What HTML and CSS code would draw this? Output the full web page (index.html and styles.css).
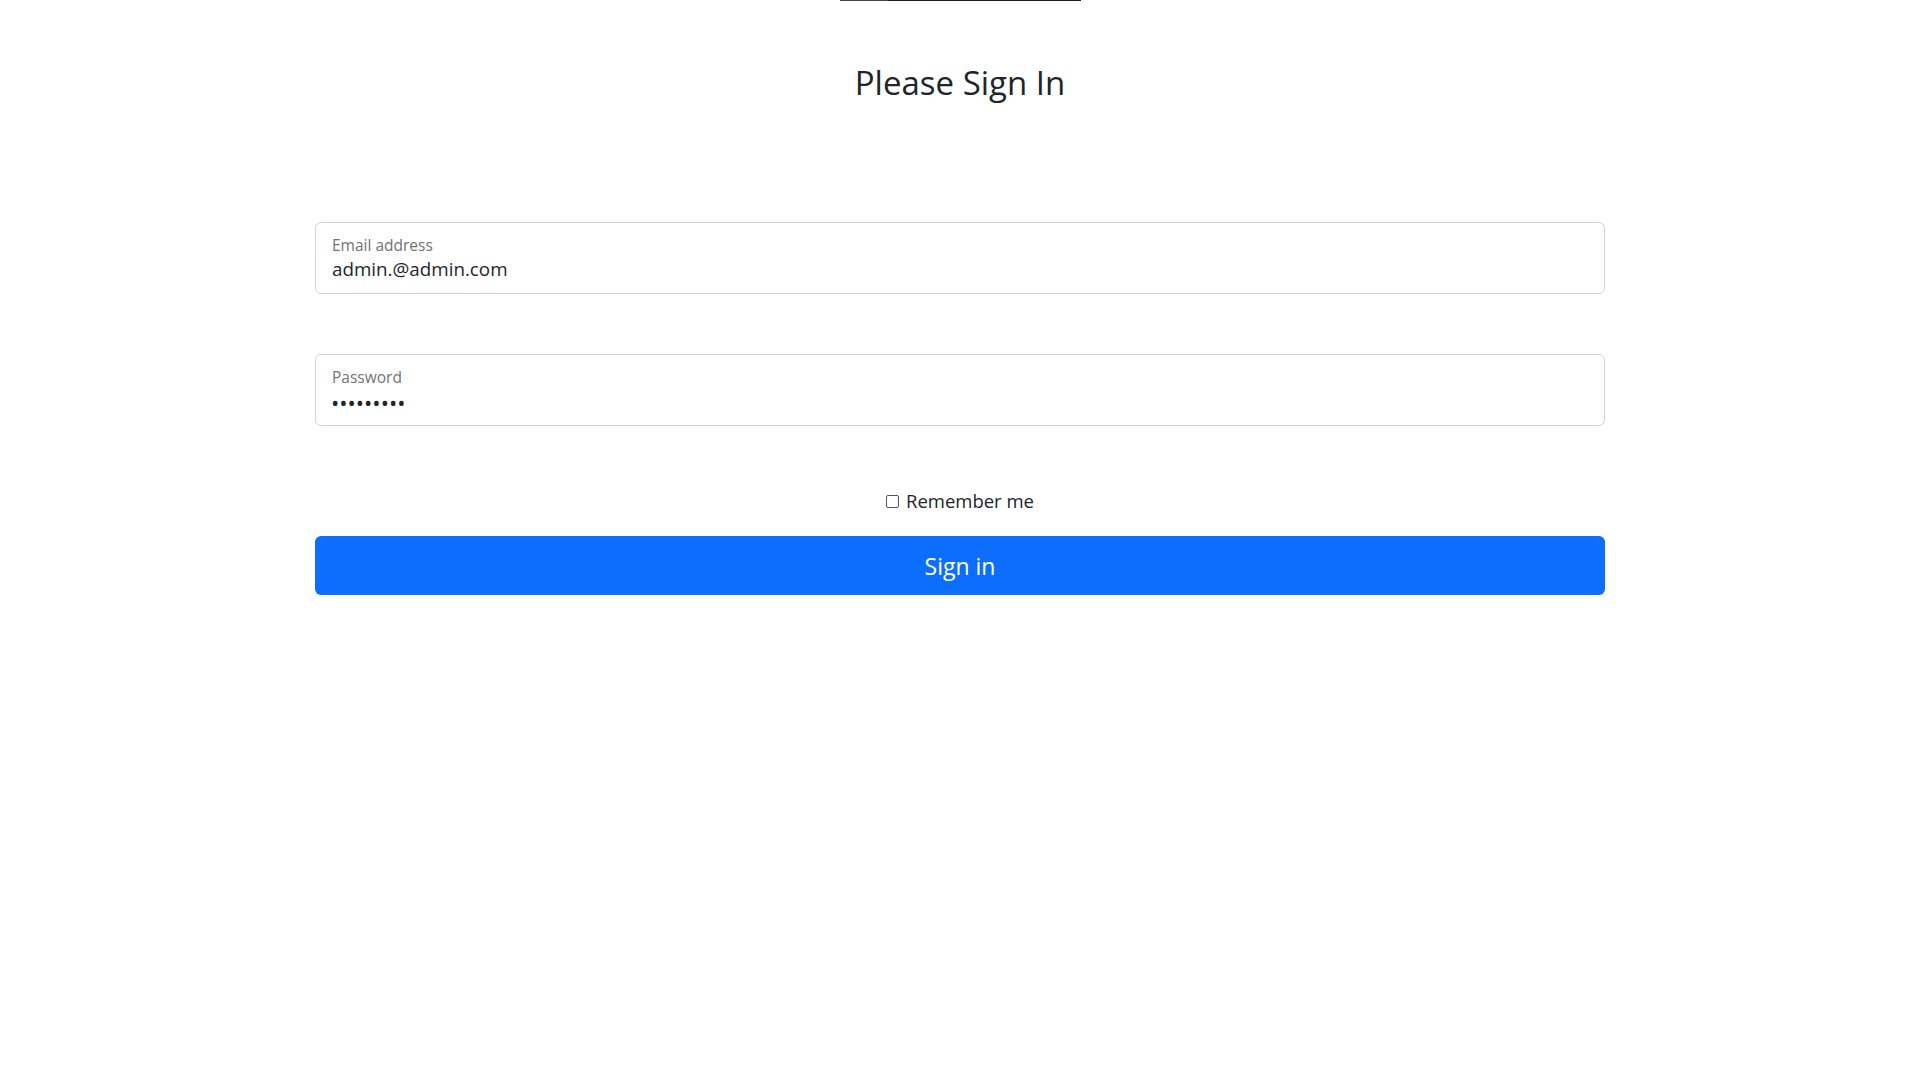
FILE: index.html
```html
<!DOCTYPE html>
<html>
<head>
<meta charset="utf-8">
<link rel="stylesheet" href="styles.css">
</head>
<body>
<div class="topline"><span class="topline-a"></span><span class="topline-b"></span></div>
<main class="signin">
  <h1 class="title">Please Sign In</h1>
  <form class="form">
    <div class="field">
      <label class="field-label">Email address</label>
      <div class="field-value">admin.@admin.com</div>
    </div>
    <div class="field field-pw">
      <label class="field-label">Password</label>
      <div class="field-value dots">•••••••••</div>
    </div>
    <div class="remember">
      <span class="check"></span>
      <span class="remember-text">Remember me</span>
    </div>
    <button type="button" class="btn">Sign in</button>
  </form>
</main>
</body>
</html>
```
FILE: styles.css
```css
html, body {
  margin: 0;
  padding: 0;
  background: #fff;
}
body {
  font-family: "Open Sans", "Noto Sans", sans-serif;
  color: #212529;
}
.topline {
  display: flex;
  justify-content: center;
  height: 1px;
}
.topline-a {
  width: 48px;
  height: 1px;
  background: #444;
}
.topline-b {
  width: 193px;
  height: 1px;
  background: #1e1e1e;
}
.signin {
  width: 1290px;
  margin: 0 auto;
  display: flex;
  flex-direction: column;
}
.title {
  margin: 61px 0 0;
  font-size: 33px;
  font-weight: 400;
  line-height: 42px;
  text-align: center;
  color: #212529;
}
.form {
  margin-top: 118px;
  display: flex;
  flex-direction: column;
}
.field {
  height: 72px;
  box-sizing: border-box;
  border: 1px solid #ced4da;
  border-radius: 6px;
  padding: 11px 16px 0;
  display: flex;
  flex-direction: column;
}
.field-pw {
  margin-top: 60px;
}
.field-label {
  font-size: 15.5px;
  line-height: 22px;
  color: #717375;
}
.field-value {
  font-size: 18.8px;
  line-height: 26px;
  color: #212529;
}
.dots {
  font-size: 22px;
  letter-spacing: 0;
  line-height: 28px;
  margin-left: -1px;
}
.remember {
  margin-top: 63px;
  display: flex;
  align-items: center;
  justify-content: center;
  gap: 7px;
  height: 24px;
}
.check {
  width: 11px;
  height: 11px;
  border: 1px solid #555;
  border-radius: 2px;
}
.remember-text {
  font-size: 18.5px;
  line-height: 24px;
}
.btn {
  margin-top: 23px;
  height: 59px;
  border: none;
  border-radius: 6px;
  background: #0d6efd;
  color: #fff;
  font-family: "Open Sans", "Noto Sans", sans-serif;
  font-size: 23px;
  padding: 0;
}
```
